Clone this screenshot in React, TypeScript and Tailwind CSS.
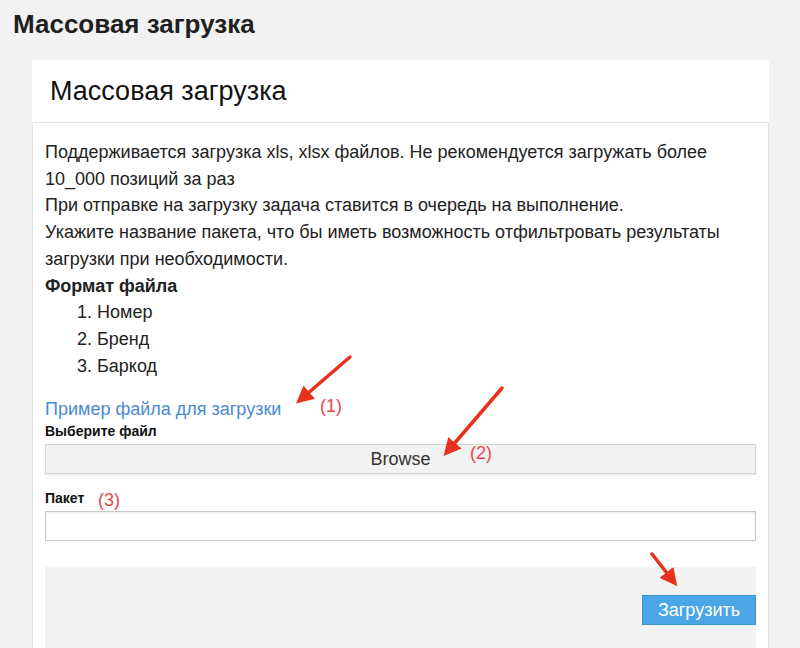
export default function App() {
  return (
    <div
      className="relative h-[648px] w-[800px] overflow-hidden bg-[#f2f2f2] text-[#222]"
      style={{ fontFamily: '"Liberation Sans", Arial, sans-serif' }}
    >
      <h1 className="pl-[13px] pt-[8px] text-[26px] font-bold leading-[32px] text-[#1f1f1f]">
        Массовая загрузка
      </h1>

      <div className="ml-[32px] mt-[20px] w-[737px]">
        <div className="flex h-[63px] items-center border-b border-[#e3e3e3] bg-white pl-[18px]">
          <span className="text-[27px] text-[#111]">Массовая загрузка</span>
        </div>

        <div className="h-[600px] border-x border-[#e3e3e3] bg-white px-[12px] pt-[16px]">
          <div className="text-[18px] leading-[26.7px] text-[#222]">
            <p>
              Поддерживается загрузка xls, xlsx файлов. Не рекомендуется загружать более
              10_000 позиций за раз
            </p>
            <p>При отправке на загрузку задача ставится в очередь на выполнение.</p>
            <p>
              Укажите название пакета, что бы иметь возможность отфильтровать результаты
              загрузки при необходимости.
            </p>
            <p className="font-bold">Формат файла</p>
            <ol className="list-decimal pl-[52px]">
              <li>Номер</li>
              <li>Бренд</li>
              <li>Баркод</li>
            </ol>
          </div>

          <a className="mt-[17px] block text-[18px] leading-[26px] text-[#4a8ad4]">
            Пример файла для загрузки
          </a>
          <label className="block text-[14px] font-bold leading-[18px] text-[#111]">
            Выберите файл
          </label>
          <div className="mt-[4px] flex h-[30px] w-[711px] items-center justify-center border border-[#d6d6d6] bg-[#f2f2f2] text-[18px] text-[#333] shadow-[0_1px_2px_rgba(0,0,0,0.12)]">
            Browse
          </div>

          <label className="mt-[15px] block text-[14px] font-bold leading-[18px] text-[#111]">
            Пакет
          </label>
          <input
            className="mt-[4px] block h-[30px] w-[711px] border border-[#c8c8c8] bg-white shadow-[inset_0_1px_2px_rgba(0,0,0,0.08)] outline-none"
            type="text"
          />

          <div className="mt-[26px] flex h-[90px] w-[711px] justify-end bg-[#f2f2f2] pt-[28px]">
            <button className="h-[30px] w-[114px] border border-[#3a95d0] bg-[#4aa6e4] text-[18px] text-white">
              Загрузить
            </button>
          </div>
        </div>
      </div>

      {/* annotations */}
      <svg className="pointer-events-none absolute left-0 top-0" width="800" height="648">
        <defs>
          <marker id="ah" markerWidth="5" markerHeight="5" refX="3.5" refY="2.5" orient="auto">
            <path d="M0,0 L5,2.5 L0,5 Z" fill="#e8321f" />
          </marker>
        </defs>
        <line x1="350" y1="357" x2="300" y2="400" stroke="#e8321f" strokeWidth="3.5" strokeLinecap="round" markerEnd="url(#ah)" />
        <line x1="502" y1="388" x2="447" y2="452" stroke="#e8321f" strokeWidth="3.5" strokeLinecap="round" markerEnd="url(#ah)" />
        <line x1="652" y1="554" x2="674" y2="582" stroke="#e8321f" strokeWidth="3.5" strokeLinecap="round" markerEnd="url(#ah)" />
      </svg>
      <span className="absolute left-[320px] top-[393px] text-[18px] text-[#e5484d]">(1)</span>
      <span className="absolute left-[470px] top-[440px] text-[18px] text-[#e5484d]">(2)</span>
      <span className="absolute left-[98px] top-[487px] text-[18px] text-[#e5484d]">(3)</span>
    </div>
  );
}
